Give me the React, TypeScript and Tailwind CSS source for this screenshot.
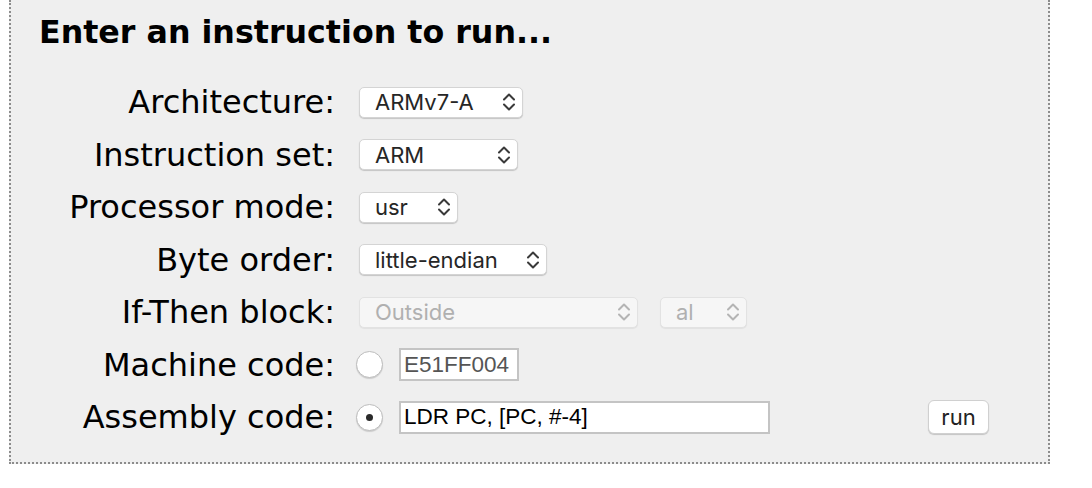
import React from "react";

const labelFont = { fontFamily: '"DejaVu Sans", Verdana, sans-serif' };
const ctrlFont = { fontFamily: '"Liberation Sans", Arial, sans-serif' };
const selFont = { fontFamily: 'Inter, "Liberation Sans", sans-serif' };

function Chevrons({ disabled }: { disabled?: boolean }) {
  return (
    <svg width="14" height="20" viewBox="0 0 14 20" fill="none" stroke={disabled ? "#b4b4b4" : "#3a3a3a"} strokeWidth="2" strokeLinecap="round" strokeLinejoin="round">
      <polyline points="2,7.5 7,2.5 12,7.5" />
      <polyline points="2,12.5 7,17.5 12,12.5" />
    </svg>
  );
}

function Select({ value, width, disabled }: { value: string; width: string; disabled?: boolean }) {
  return (
    <div
      style={selFont}
      className={
        "flex h-[31px] items-center justify-between rounded-[5px] border pl-[15px] pr-[6px] text-[22px] leading-none " +
        width +
        (disabled
          ? " border-[#e2e2e2] bg-[#f6f6f6] text-[#b0b0b0] shadow-[0_1px_1px_rgba(0,0,0,0.06)]"
          : " border-[#d4d4d4] bg-white text-[#262626] shadow-[0_1px_1px_rgba(0,0,0,0.18)]")
      }
    >
      <span>{value}</span>
      <Chevrons disabled={disabled} />
    </div>
  );
}

function Radio({ checked }: { checked?: boolean }) {
  return (
    <div className="-ml-[3px] mr-[16px] flex h-[27px] w-[27px] items-center justify-center rounded-full border border-[#bdbdbd] bg-white shadow-[0_1px_1px_rgba(0,0,0,0.15)]">
      {checked && <div className="h-[7px] w-[7px] rounded-full bg-[#2a2a2a]" />}
    </div>
  );
}

function Label({ children }: { children: React.ReactNode }) {
  return (
    <div style={labelFont} className="text-right text-[32px] leading-none text-black">
      {children}
    </div>
  );
}

export default function App() {
  return (
    <div className="min-h-screen bg-white pl-[9px] pr-[42px]">
      <div className="border-x-2 border-b-2 border-dotted border-[#8c8c8c] bg-[#efefef] pb-[18px]">
        <h2 style={labelFont} className="h-[76px] pl-[28px] pt-[17px] text-[31.7px] font-bold leading-none text-black">
          Enter an instruction to run...
        </h2>
        <div className="grid grid-cols-[324px_1fr] auto-rows-[52.5px] items-center gap-x-[24px]">
          <Label>Architecture:</Label>
          <div><Select value="ARMv7-A" width="w-[164px]" /></div>

          <Label>Instruction set:</Label>
          <div><Select value="ARM" width="w-[159px]" /></div>

          <Label>Processor mode:</Label>
          <div><Select value="usr" width="w-[99px]" /></div>

          <Label>Byte order:</Label>
          <div><Select value="little-endian" width="w-[188px]" /></div>

          <Label>If-Then block:</Label>
          <div className="flex items-center gap-[22px]">
            <Select value="Outside" width="w-[279px]" disabled />
            <Select value="al" width="w-[87px]" disabled />
          </div>

          <Label>Machine code:</Label>
          <div className="flex items-center">
            <Radio />
            <div style={ctrlFont} className="flex h-[33px] w-[120px] items-center border-2 border-[#c4c4c4] bg-white pl-[3px] text-[22.5px] leading-none text-[#555]">
              E51FF004
            </div>
          </div>

          <Label>Assembly code:</Label>
          <div className="flex items-center">
            <Radio checked />
            <div style={ctrlFont} className="flex h-[33px] w-[371px] items-center border-2 border-[#c4c4c4] bg-white pl-[3px] text-[22.5px] leading-none text-black">
              LDR PC, [PC, #-4]
            </div>
            <button style={selFont} className="ml-[158px] h-[34px] w-[61px] rounded-[6px] border border-[#d0d0d0] bg-white text-[22px] leading-none text-[#222] shadow-[0_1px_1px_rgba(0,0,0,0.18)]">
              run
            </button>
          </div>
        </div>
      </div>
    </div>
  );
}
